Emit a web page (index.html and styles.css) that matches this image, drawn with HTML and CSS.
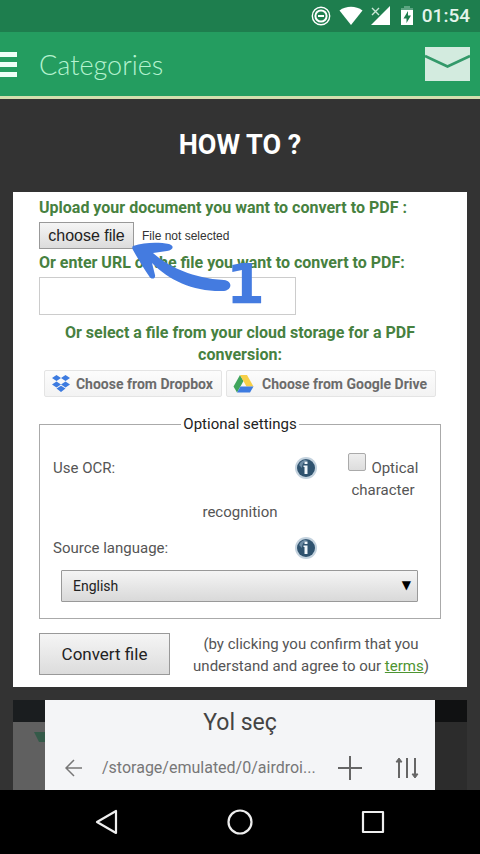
FILE: index.html
```html
<!DOCTYPE html>
<html lang="en">
<head>
    <meta charset="UTF-8">
    <meta name="viewport" content="width=device-width, initial-scale=1.0">
    <title>How To</title>
    <link rel="stylesheet" href="styles.css">
</head>
<body>

    <!-- Phone status bar -->
    <div class="status-bar">
        <svg width="20" height="20" viewBox="0 0 20 20" fill="none" stroke="#fff">
            <circle cx="10" cy="10" r="8.7" stroke-width="1.4"/>
            <circle cx="10" cy="10" r="5.6" stroke-width="2"/>
            <path d="M7 10h6" stroke-width="2"/>
        </svg>
        <svg class="wifi" width="24" height="20" viewBox="0 0 24 20" fill="#fff">
            <path d="M0.5 4.5C7 -0.5 17 -0.5 23.500 4.500L12 19z"/>
        </svg>
        <svg class="signal" width="20" height="20" viewBox="0 0 20 20">
            <path d="M19 0V19H0z" fill="#fff"/>
            <path d="M0 0h9v10H0z" fill="#1e7e4e"/>
            <path d="M1 2l7 7M8 2l-7 7" stroke="#c9e6d6" stroke-width="1.4"/>
        </svg>
        <svg class="battery" width="14" height="20" viewBox="0 0 14 20">
            <path d="M4 0h6v2h3v3H1V2h3z" fill="#5ba582"/>
            <path d="M1 4h12v15H1z" fill="#fff"/>
            <path d="M8 5L3.500 12.500H6.500V17L11 9.500H8z" fill="#1e7e4e"/>
        </svg>
        <span class="clock">01:54</span>
    </div>

    <!-- App header -->
    <header class="header">
        <button class="menu-button" aria-label="Menu">
            <span></span>
            <span></span>
            <span></span>
        </button>
        <div class="header-title">Categories</div>
        <a class="mail" href="#" aria-label="Mail">
            <svg width="45" height="34" viewBox="0 0 45 34">
                <path d="M0 0h45v34H0z" fill="#d3ebdf"/>
                <path d="M0 9l22.500 10.500L45 9" fill="none" stroke="#33996a" stroke-width="2.500"/>
            </svg>
        </a>
    </header>

    <main class="content">
        <h1>HOW TO ?</h1>

        <form class="card">
            <div class="field-title">Upload your document you want to convert to PDF :</div>
            <div class="file-row">
                <button type="button" class="grey-button choose-file">choose file</button>
                <span>File not selected</span>
            </div>

            <label class="field-title" for="url">Or enter URL of the file you want to convert to PDF:</label>
            <input class="url-input" type="text" id="url">

            <div class="field-title cloud-title">Or select a file from your cloud storage for a PDF conversion:</div>
            <div class="cloud-buttons">
                <button type="button" class="cloud-button">
                    <svg width="20" height="18" viewBox="0 0 20 18" fill="#3d7be0">
                        <path d="M5.500 0L10 3 5.500 6 1 3zM14.500 0L19 3 14.500 6 10 3zM5.500 6.500L10 9.500 5.500 12.500 1 9.500zM14.500 6.500L19 9.500 14.500 12.500 10 9.500zM5.500 13.500L10 10.700 14.500 13.500 10 17z"/>
                    </svg>
                    Choose from Dropbox
                </button>
                <button type="button" class="cloud-button drive">
                    <svg width="21" height="18" viewBox="0 0 21 18">
                        <path d="M7 0L0.500 11.500 4 17.500 10.500 6z" fill="#3fa45b"/>
                        <path d="M7 0h7l6.500 11.500h-7z" fill="#f7cf47"/>
                        <path d="M7.500 11.500h13L17 17.500H4z" fill="#3d7be0"/>
                    </svg>
                    Choose from Google Drive
                </button>
            </div>

            <fieldset>
                <legend>Optional settings</legend>
                <div class="settings">
                    <span>Use OCR:</span>
                    <svg class="info" width="24" height="24" viewBox="0 0 24 24">
                        <circle cx="12" cy="12" r="11" fill="#c3d2de"/>
                        <circle cx="12" cy="12" r="9" fill="#2f536f"/>
                        <path d="M5 9a8 8 0 0 1 9-5c-4 1-6 4-6 8z" fill="#6c8aa3"/>
                        <path d="M10.500 5.500h3v2.500h-3zM9.500 9.500h4V18h-3v-7h-1z" fill="#f0f6fb"/>
                    </svg>
                    <label class="ocr" for="ocr">
                        <span class="ocr-text"><input type="checkbox" id="ocr"> Optical character</span>
                        <span class="ocr-rest">recognition</span>
                    </label>
                    <label class="language-label" for="language">Source language:</label>
                    <svg class="info language-info" width="24" height="24" viewBox="0 0 24 24">
                        <circle cx="12" cy="12" r="11" fill="#c3d2de"/>
                        <circle cx="12" cy="12" r="9" fill="#2f536f"/>
                        <path d="M5 9a8 8 0 0 1 9-5c-4 1-6 4-6 8z" fill="#6c8aa3"/>
                        <path d="M10.500 5.500h3v2.500h-3zM9.500 9.500h4V18h-3v-7h-1z" fill="#f0f6fb"/>
                    </svg>
                </div>
                <div class="select-wrap">
                    <select id="language">
                        <option>English</option>
                    </select>
                </div>
            </fieldset>

            <div class="submit-row">
                <button type="submit" class="grey-button convert">Convert file</button>
                <p>(by clicking you confirm that you understand and agree to our <a href="#">terms</a>)</p>
            </div>

            <!-- Step marker drawn over the form -->
            <div class="step">
                <svg width="100" height="52" viewBox="0 0 100 52" fill="#447be0">
                    <path d="M1 4C13 0 27 0 37 2C43 4 41 8 35 9L21 11C37 25 60 36 92 38C101 39 100 48 92 49C62 50 38 39 20 21L23 33C24 37 19 38 17 34C11 25 6 17 1 8C0 6 0 5 1 4z"/>
                </svg>
                <span class="step-number">1</span>
            </div>
        </form>

        <!-- Second step -->
        <section class="next-card">
            <div class="shade left">
                <svg width="11" height="10" viewBox="0 0 11 10"><path d="M0 0h11v10H5z" fill="#345a49"/></svg>
            </div>
            <div class="dialog">
                <h2>Yol seç</h2>
                <div class="path-row">
                    <button aria-label="Back">
                        <svg width="18" height="18" viewBox="0 0 18 18" fill="none" stroke="#777" stroke-width="1.500">
                            <path d="M17 9H1M9 1L1 9l8 8"/>
                        </svg>
                    </button>
                    <span class="path">/storage/emulated/0/airdroi...</span>
                    <button aria-label="Add">
                        <svg width="26" height="26" viewBox="0 0 26 26" fill="none" stroke="#666" stroke-width="2">
                            <path d="M13 1v24M1 13h24"/>
                        </svg>
                    </button>
                    <button class="sort" aria-label="Sort">
                        <svg width="24" height="22" viewBox="0 0 24 22" fill="none" stroke="#666" stroke-width="2">
                            <path d="M4 21V3M12 1v20M20 1v18"/>
                            <path d="M1 5l3-4 3 4zM17 17l3 4 3-4z" fill="#666" stroke-width="1"/>
                        </svg>
                    </button>
                </div>
            </div>
            <div class="shade right"></div>
        </section>
    </main>

    <!-- Phone navigation -->
    <nav class="nav-bar">
        <button aria-label="Back">
            <svg width="26" height="26" viewBox="0 0 26 26" fill="none" stroke="#eee" stroke-width="2.200" stroke-linejoin="round">
                <path d="M22 2v22L3 13z"/>
            </svg>
        </button>
        <button aria-label="Home">
            <svg width="26" height="26" viewBox="0 0 26 26" fill="none" stroke="#eee" stroke-width="2.200">
                <circle cx="13" cy="13" r="11.500"/>
            </svg>
        </button>
        <button aria-label="Recent apps">
            <svg width="26" height="26" viewBox="0 0 26 26" fill="none" stroke="#eee" stroke-width="2.200" stroke-linejoin="round">
                <path d="M3 3h20v20H3z"/>
            </svg>
        </button>
    </nav>

</body>
</html>
```
FILE: styles.css
```css
* {
    box-sizing: border-box;
}
body {
    margin: 0;
    height: 100vh;
    display: flex;
    flex-direction: column;
    font-family: Roboto, sans-serif;
    font-size: 15px;
    line-height: 22px;
    color: #555;
    background-color: #333;
}
button {
    font-family: inherit;
    padding: 0;
    border: none;
    background: none;
    cursor: pointer;
}
svg {
    display: block;
    flex-shrink: 0;
}

/* Status bar and header */
.status-bar {
    flex: none;
    height: 32px;
    display: flex;
    align-items: center;
    justify-content: flex-end;
    padding-right: 10px;
    background-color: #1e7e4e;
}
.wifi {
    margin-left: 8px;
}
.signal {
    margin-left: 8px;
}
.battery {
    margin-left: 9px;
}
.clock {
    margin-left: 8px;
    font-size: 19px;
    font-weight: 500;
    color: #e4f4eb;
}
.header {
    flex: none;
    height: 67px;
    display: flex;
    align-items: center;
    padding-right: 10px;
    background-color: #249d60;
    border-bottom: 3px solid #d3dfae;
}
.menu-button {
    width: 17px;
    display: flex;
    flex-direction: column;
    gap: 5px;
}
.menu-button span {
    height: 5px;
    background-color: #effff7;
}
.header-title {
    flex: 1;
    margin-left: 22px;
    padding-top: 2px;
    font-family: Lato, sans-serif;
    font-size: 27px;
    font-weight: 300;
    line-height: 32px;
    color: #b5f3d0;
}

/* Page content */
.content {
    flex: 1;
    min-height: 0;
    overflow: hidden;
    padding: 0 13px;
}
h1 {
    margin: 30px 0;
    font-size: 27px;
    line-height: 33px;
    text-align: center;
    color: #fff;
}
.card {
    position: relative;
    padding: 5px 26px 10px;
    background-color: #fff;
}
.field-title {
    display: block;
    font-size: 16px;
    font-weight: bold;
    line-height: 22px;
    color: #47813f;
}
.file-row {
    display: flex;
    align-items: center;
    gap: 8px;
    margin: 3px 0;
    font-family: "Liberation Sans", sans-serif;
    font-size: 12px;
    color: #333;
}
.grey-button {
    border: 1px solid #999;
    background: linear-gradient(#f5f5f5, #dcdcdc);
    color: #222;
}
.choose-file {
    width: 95px;
    height: 27px;
    font-family: "Liberation Sans", sans-serif;
    font-size: 16px;
}
.url-input {
    display: block;
    width: 64%;
    height: 38px;
    margin-top: 3px;
    padding: 0 8px;
    border: 1px solid #ccc;
    font-size: 15px;
}
.cloud-title {
    margin-top: 7px;
    text-align: center;
}
.cloud-buttons {
    display: flex;
    justify-content: center;
    gap: 4px;
    margin-top: 4px;
}
.cloud-button {
    height: 27px;
    display: flex;
    align-items: center;
    gap: 5px;
    padding: 0 8px 0 6px;
    border: 1px solid #e4e4e4;
    border-radius: 2px;
    background: linear-gradient(#fcfcfc, #f3f3f3);
    font-size: 14px;
    font-weight: bold;
    color: #6b6b6b;
    white-space: nowrap;
}
.drive {
    gap: 8px;
}
fieldset {
    min-width: 0;
    margin: 16px 0 0;
    padding: 22px 13px 16px;
    border: 1px solid #aaa;
}
legend {
    margin: 0 auto;
    padding: 0 2px;
    color: #222;
}
.settings {
    display: grid;
    grid-template-columns: 1fr 24px 80px;
    column-gap: 29px;
    align-items: start;
}
.info {
    grid-column: 2;
    margin-top: -1px;
}
.ocr {
    display: contents;
}
.ocr-text {
    padding-right: 8px;
    text-align: center;
}
.ocr-text input {
    appearance: none;
    width: 18px;
    height: 18px;
    margin: -4px 2px 0 0;
    border: 1px solid #aaa;
    border-radius: 2px;
    background: linear-gradient(#eee, #ddd);
    vertical-align: 2px;
}
.ocr-rest {
    grid-column: 1 / -1;
    text-align: center;
}
.language-label {
    grid-row: 3;
    margin-top: 14px;
}
.language-info {
    margin-top: 13px;
}
.select-wrap {
    position: relative;
    margin: 10px 9px 0 8px;
}
.select-wrap::after {
    content: "▼";
    position: absolute;
    top: 4px;
    right: 7px;
    font-family: "DejaVu Sans", sans-serif;
    font-size: 12px;
    color: #000;
    pointer-events: none;
}
select {
    appearance: none;
    display: block;
    width: 100%;
    height: 32px;
    padding: 0 11px;
    border: 1px solid #999;
    border-radius: 1px;
    background: linear-gradient(#f5f5f5, #d9d9d9);
    font-family: inherit;
    font-size: 14px;
    color: #222;
}
.submit-row {
    display: flex;
    justify-content: space-between;
    margin-top: 14px;
}
.convert {
    flex: none;
    width: 131px;
    height: 42px;
    font-size: 17px;
}
.submit-row p {
    width: 260px;
    margin: 0;
    text-align: center;
}
.submit-row a {
    color: #4d9431;
}
.step {
    position: absolute;
    top: 50px;
    left: 119px;
}
.step-number {
    position: absolute;
    top: 14px;
    left: 94px;
    font-family: "DejaVu Sans", sans-serif;
    font-size: 56px;
    font-weight: bold;
    line-height: 56px;
    color: #447be0;
}

/* Folder picker of the second step */
.next-card {
    display: flex;
    height: 120px;
    margin-top: 13px;
}
.shade {
    width: 32px;
    border-top: 22px solid #1a1d1f;
    background-color: #606060;
}
.shade svg {
    margin: 10px 0 0 21px;
}
.right {
    border-top-color: #101112;
    background-color: #2c2c2c;
}
.dialog {
    flex: 1;
    min-width: 0;
    background-color: #f4f5f7;
}
h2 {
    margin: 8px 0 0;
    font-size: 23px;
    font-weight: normal;
    line-height: 30px;
    text-align: center;
    color: #444;
}
.path-row {
    display: flex;
    align-items: center;
    margin-top: 17px;
    padding: 0 16px 0 20px;
    font-size: 16px;
    color: #777;
}
.path {
    flex: 1;
    margin: 0 10px 0 19px;
    white-space: nowrap;
}
.sort {
    margin-left: 32px;
}

/* Phone navigation */
.nav-bar {
    flex: none;
    height: 64px;
    display: flex;
    align-items: center;
    justify-content: center;
    gap: 107px;
    background-color: #000;
}
```
